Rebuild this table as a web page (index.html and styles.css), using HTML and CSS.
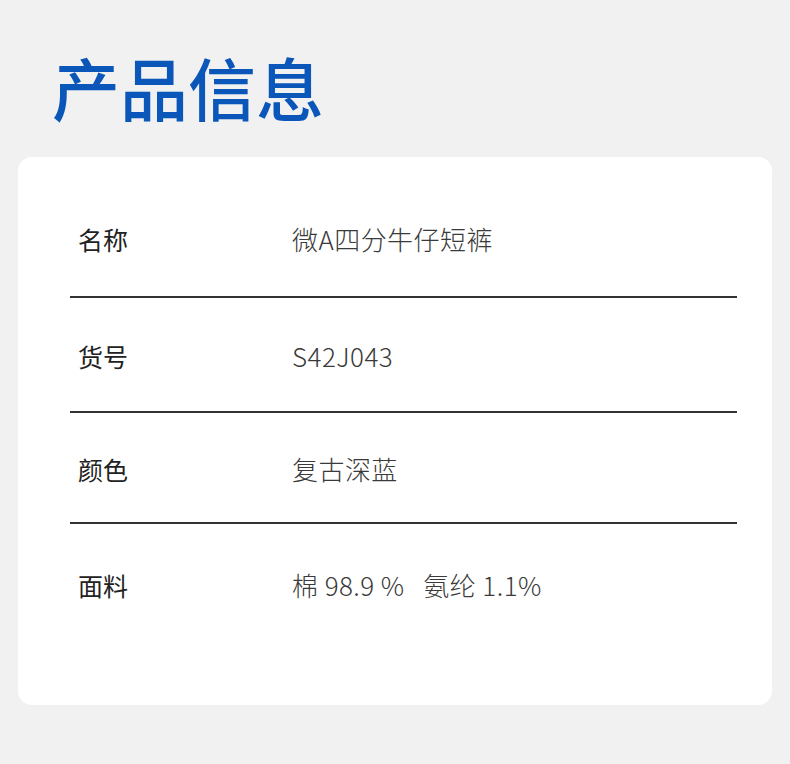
FILE: index.html
```html
<!DOCTYPE html>
<html lang="zh-CN">
<head>
<meta charset="utf-8">
<title>产品信息</title>
<link rel="stylesheet" href="styles.css">
</head>
<body>
<div class="page">
  <h1 class="title">产品信息</h1>
  <div class="card">
    <div class="row row-1">
      <div class="label">名称</div>
      <div class="value">微A四分牛仔短裤</div>
    </div>
    <div class="row row-2">
      <div class="label">货号</div>
      <div class="value">S42J043</div>
    </div>
    <div class="row row-3">
      <div class="label">颜色</div>
      <div class="value">复古深蓝</div>
    </div>
    <div class="row row-4">
      <div class="label">面料</div>
      <div class="value">棉 98.9 %&nbsp;&nbsp;&nbsp;氨纶 1.1%</div>
    </div>
  </div>
</div>
</body>
</html>
```

FILE: styles.css
```css
html, body {
  margin: 0;
  padding: 0;
  background: #f1f1f1;
}
body {
  font-family: "Noto Sans CJK SC", "Noto Sans", sans-serif;
  color: #333;
}
.page {
  width: 790px;
  height: 764px;
  padding-top: 53px;
  box-sizing: border-box;
}
.title {
  margin: 0 0 36px 52px;
  font-size: 68px;
  line-height: 68px;
  font-weight: 500;
  color: #0b57b9;
  letter-spacing: 0;
}
.card {
  margin: 0 18px;
  height: 548px;
  background: #fff;
  border-radius: 14px;
  padding: 0 35px 0 52px;
  box-sizing: border-box;
}
.row {
  display: flex;
  align-items: center;
  padding-left: 8px;
  border-bottom: 2px solid #333;
  line-height: 32px;
}
.row-1 { padding-top: 66px; padding-bottom: 41px; }
.row-2 { padding-top: 42px; padding-bottom: 39px; }
.row-3 { padding-top: 40px; padding-bottom: 37px; }
.row-4 { padding-top: 45px; border-bottom: none; }
.label {
  width: 214px;
  flex: none;
  font-size: 25px;
  font-weight: 400;
  color: #222;
}
.value {
  font-size: 26px;
  font-weight: 300;
  color: #3a3a3a;
  letter-spacing: 0.45px;
}
```
